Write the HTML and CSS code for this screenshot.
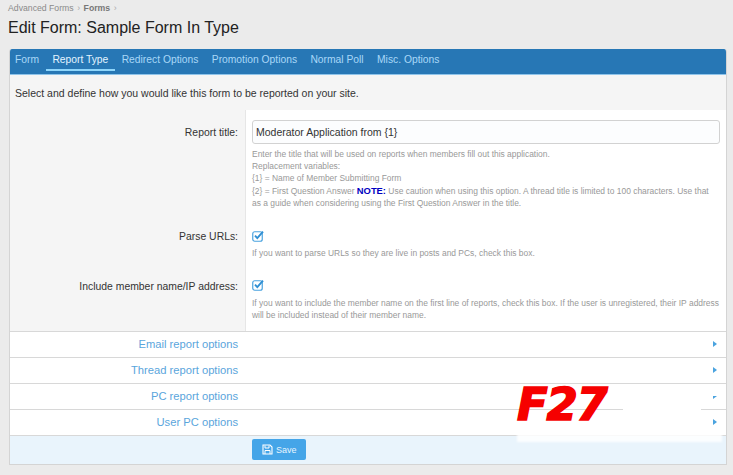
FILE: index.html
```html
<!DOCTYPE html>
<html lang="en">
<head>
    <meta charset="UTF-8">
    <title>Edit Form: Sample Form In Type</title>
    <link rel="stylesheet" href="styles.css">
</head>
<body>
    <nav class="breadcrumb">
        <span>Advanced Forms</span><span class="sep">&rsaquo;</span><span class="current">Forms</span><span class="sep">&rsaquo;</span>
    </nav>
    <h1 class="page-title">Edit Form: Sample Form In Type</h1>

    <div class="panel">
        <div class="tabs">
            <a class="tab">Form</a>
            <a class="tab active">Report Type</a>
            <a class="tab">Redirect Options</a>
            <a class="tab">Promotion Options</a>
            <a class="tab">Normal Poll</a>
            <a class="tab">Misc. Options</a>
        </div>

        <p class="intro">Select and define how you would like this form to be reported on your site.</p>

        <div class="row row-title">
            <label class="row-label">Report title:</label>
            <div class="row-field">
                <div class="text-input">Moderator Application from {1}</div>
                <p class="hint">Enter the title that will be used on reports when members fill out this application.<br>
                Replacement variables:<br>
                {1} = Name of Member Submitting Form<br>
                {2} = First Question Answer <b class="note">NOTE:</b> Use caution when using this option. A thread title is limited to 100 characters. Use that<br>
                as a guide when considering using the First Question Answer in the title.</p>
            </div>
        </div>

        <div class="row row-parse">
            <label class="row-label">Parse URLs:</label>
            <div class="row-field">
                <svg class="check" width="12" height="12" viewBox="0 0 12 12"><rect x="0.75" y="1.75" width="9.5" height="9.5" rx="2" fill="none" stroke="#4aa3df" stroke-width="1.2"/><path d="M3 5.6l2.3 2.5L11 1.6" fill="none" stroke="#2f8fd3" stroke-width="1.9"/></svg>
                <p class="hint">If you want to parse URLs so they are live in posts and PCs, check this box.</p>
            </div>
        </div>

        <div class="row row-member">
            <label class="row-label">Include member name/IP address:</label>
            <div class="row-field">
                <svg class="check" width="12" height="12" viewBox="0 0 12 12"><rect x="0.75" y="1.75" width="9.5" height="9.5" rx="2" fill="none" stroke="#4aa3df" stroke-width="1.2"/><path d="M3 5.6l2.3 2.5L11 1.6" fill="none" stroke="#2f8fd3" stroke-width="1.9"/></svg>
                <p class="hint">If you want to include the member name on the first line of reports, check this box. If the user is unregistered, their IP address will be included instead of their member name.</p>
            </div>
        </div>

        <div class="collapse"><span class="collapse-title">Email report options</span><i class="arrow"></i></div>
        <div class="collapse"><span class="collapse-title">Thread report options</span><i class="arrow"></i></div>
        <div class="collapse"><span class="collapse-title">PC report options</span><i class="arrow"></i></div>
        <div class="collapse"><span class="collapse-title">User PC options</span><i class="arrow"></i></div>

        <div class="actions">
            <button class="save">
                <svg width="11" height="11" viewBox="0 0 11 11"><path d="M1 1h7l2 2v7H1z" fill="none" stroke="#fff" stroke-width="1.1"/><path d="M3 1.5v2.5h4V1.5M3 10V6.5h5V10" fill="none" stroke="#fff" stroke-width="1"/></svg>
                Save
            </button>
        </div>

        <div class="watermark">
            <span class="wm-logo">F27</span>
            <span class="wm-gap"></span>
            <span class="wm-tick"></span>
            <span class="wm-line"></span>
        </div>
    </div>
</body>
</html>
```

FILE: styles.css
```css
body {
    margin: 0;
    background: #ebebeb;
    font-family: "Liberation Sans", Arial, sans-serif;
    font-size: 11px;
    color: #333;
    height: 475px;
    overflow: hidden;
}
.breadcrumb {
    padding: 2px 8px 0;
    height: 12px;
    line-height: 12px;
    font-size: 8.7px;
    color: #8a8a8a;
}
.breadcrumb .current {
    font-weight: bold;
    color: #777;
}
.breadcrumb .sep {
    margin: 0 3.5px;
    color: #aaa;
}
.page-title {
    margin: 2px 8px 0;
    height: 24px;
    line-height: 24px;
    font-size: 16px;
    font-weight: normal;
    color: #222;
}
.panel {
    position: relative;
    margin: 9px 6px 0 9px;
    width: 718px;
    height: 416px;
    box-sizing: border-box;
    background: #fff;
    border-radius: 3px 3px 0 0;
    border-right: 1px solid #d4d4d4;
    border-bottom: 1px solid #d4d4d4;
    border-left: 1px solid #d4d4d4;
    overflow: hidden;
}
.tabs {
    display: flex;
    height: 26px;
    margin: 0 -1px;
    background: #2777b5;
    border-bottom: 1px solid #8fc4ea;
    box-sizing: border-box;
}
.tab {
    padding: 0 6.7px;
    line-height: 21px;
    font-size: 10.3px;
    color: #a9d8f8;
    height: 22px;
    box-sizing: border-box;
}
.tabs .tab:first-child {
    margin-left: -0.7px;
}
.tab.active {
    color: #e3f4ff;
    border-bottom: 2px solid #8fd6fb;
}
.intro {
    margin: 0;
    height: 35px;
    padding: 0 5px;
    line-height: 37px;
    font-size: 10.5px;
    color: #333;
    background: #f5f5f5;
    box-sizing: border-box;
}
.row {
    display: flex;
}
.row-label {
    width: 228px;
    padding: 16px 7px 0 0;
    text-align: right;
    font-size: 10.4px;
    line-height: 13px;
    color: #333;
    background: #f5f5f5;
    flex: none;
}
.row-field {
    flex: 1;
    padding: 10px 6px 0 6px;
    border-left: 1px solid #e6e6e6;
    min-width: 0;
}
.row-title { height: 110px; }
.row-parse { height: 50px; }
.row-member { height: 61px; }
.row-parse .row-label,
.row-member .row-label { padding-top: 10px; }
.row-parse .row-field { padding-top: 10px; }
.row-member .row-field { padding-top: 9px; }
.row-parse .hint { margin-top: 5px; }
.row-member .hint { margin-top: 6px; }
.text-input {
    height: 24px;
    line-height: 22px;
    padding: 0 3px;
    box-sizing: border-box;
    border: 1px solid #d2d2d2;
    border-radius: 3px;
    background: #fcfdfe;
    font-size: 10.5px;
    color: #333;
}
.hint {
    margin: 4px 0 0;
    font-size: 8.45px;
    line-height: 12.2px;
    color: #999;
}
.note {
    color: #0000c0;
    font-size: 9.4px;
}
.check {
    display: block;
}
.collapse {
    display: flex;
    align-items: center;
    justify-content: space-between;
    height: 26px;
    box-sizing: border-box;
    border-top: 1px solid #d8d8d8;
    background: #fff;
    padding-right: 9px;
    padding-bottom: 2px;
}
.collapse-title {
    width: 228px;
    text-align: right;
    font-size: 11.2px;
    color: #5aa5dc;
}
.arrow {
    width: 0;
    height: 0;
    border-left: 4px solid #4aa3df;
    border-top: 3.5px solid transparent;
    border-bottom: 3.5px solid transparent;
}
.actions {
    height: 29px;
    padding: 3px 0 0 242px;
    box-sizing: border-box;
    background: #e9f4fc;
    border-top: 1px solid #d8d8d8;
}
.save {
    display: flex;
    align-items: center;
    gap: 3px;
    width: 54px;
    height: 21px;
    padding: 0 0 0 10px;
    border: 0;
    border-radius: 2px;
    background: #45a5e8;
    color: #e8f5ff;
    font-family: inherit;
    font-size: 9px;
}
/* marca de agua encima del panel */
.watermark {
    position: absolute;
    left: 507px;
    top: 335px;
    width: 210px;
    height: 60px;
}
.wm-logo {
    position: absolute;
    left: 0;
    top: 3px;
    font-family: "DejaVu Sans", sans-serif;
    font-size: 45px;
    line-height: 36px;
    font-weight: bold;
    font-style: italic;
    letter-spacing: -1.3px;
    color: #f60000;
    -webkit-text-stroke: 1.6px #f60000;
}
.wm-gap {
    position: absolute;
    left: 106px;
    top: 23px;
    width: 78px;
    height: 4px;
    background: #fff;
}
.wm-tick {
    position: absolute;
    left: 195px;
    top: 8px;
    width: 9px;
    height: 4px;
    background: #fff;
}
.wm-line {
    position: absolute;
    left: 0;
    top: 49px;
    width: 205px;
    height: 9px;
    background: rgba(255, 255, 255, 0.85);
    filter: blur(1px);
}
```
